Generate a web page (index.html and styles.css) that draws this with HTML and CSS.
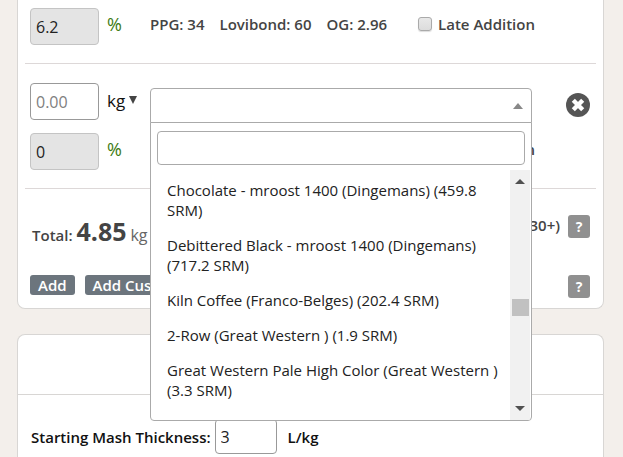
FILE: index.html
```html
<!DOCTYPE html>
<html lang="en">
<head>
  <meta charset="UTF-8" />
  <meta name="viewport" content="width=device-width, initial-scale=1" />
  <title>Recipe Editor</title>
  <link rel="stylesheet" href="styles.css">
</head>
<body>

  <section class="card fermentables">
    <div class="ingredient">
      <input class="field" type="text" value="6.2" aria-label="Percent of bill" readonly />
      <span class="percent">%</span>
      <div class="stats">
        <span>PPG: 34</span>
        <span>Lovibond: 60</span>
        <span>OG: 2.96</span>
        <label class="late"><input type="checkbox" /> Late Addition</label>
      </div>
    </div>

    <div class="ingredient">
      <input class="field" type="text" placeholder="0.00" aria-label="Amount" />
      <button class="unit" type="button">kg <svg width="8" height="8" viewBox="0 0 8 8"><path d="M0 0h8L4 8z" fill="#444" /></svg></button>

      <!-- Fermentable picker -->
      <div class="picker">
        <button class="picker-toggle" type="button" aria-label="Choose fermentable" aria-expanded="true">
          <svg width="10" height="6" viewBox="0 0 10 6"><path d="M0 6h10L5 0z" fill="#888" /></svg>
        </button>
        <div class="picker-menu">
          <input class="picker-search" type="text" aria-label="Search fermentables" />
          <div class="picker-results">
            <ul class="picker-list">
              <li>Chocolate - mroost 1400 (Dingemans) (459.8 SRM)</li>
              <li>Debittered Black - mroost 1400 (Dingemans) (717.2 SRM)</li>
              <li>Kiln Coffee (Franco-Belges) (202.4 SRM)</li>
              <li>2-Row (Great Western ) (1.9 SRM)</li>
              <li>Great Western Pale High Color (Great Western ) (3.3 SRM)</li>
              <li>Crystal (Franco-Belges)</li>
            </ul>
            <div class="scrollbar">
              <svg width="10" height="5" viewBox="0 0 10 5"><path d="M0 5h10L5 0z" fill="#505050" /></svg>
              <div class="scrollbar-thumb"></div>
              <svg width="10" height="5" viewBox="0 0 10 5"><path d="M0 0h10L5 5z" fill="#505050" /></svg>
            </div>
          </div>
        </div>
      </div>

      <button class="remove" type="button" aria-label="Remove">
        <svg width="24" height="24" viewBox="0 0 24 24">
          <circle cx="12" cy="12" r="12" fill="#555" />
          <path d="M7.3 7.3l9.4 9.4M16.7 7.3l-9.4 9.4" stroke="#fff" stroke-width="4.4" />
        </svg>
      </button>

      <input class="field" type="text" value="0" aria-label="Percent of bill" readonly />
      <span class="percent">%</span>
      <div class="stats">
        <span>PPG: 34</span>
        <span>Lovibond: 60</span>
        <span>OG: 2.96</span>
        <label class="late"><input type="checkbox" /> Late Addition</label>
      </div>
    </div>

    <div class="total-row">
      <span class="total">Total: <strong>4.85</strong> <span class="total-unit">kg</span></span>
      <span class="total-note">(30+)</span>
      <button class="help" type="button">?</button>
    </div>

    <div class="actions">
      <button class="btn" type="button">Add</button>
      <button class="btn" type="button">Add Custom</button>
      <button class="help" type="button">?</button>
    </div>
  </section>

  <section class="card mash">
    <div class="card-header"></div>
    <div class="mash-row">
      <label for="thickness">Starting Mash Thickness:</label>
      <input class="thickness" id="thickness" type="text" value="3" />
      <span>L/kg</span>
    </div>
  </section>

</body>
</html>
```
FILE: styles.css
```css
* {
  box-sizing: border-box;
}

body {
  margin: 0;
  padding: 0 19px 0 17px;
  min-height: 100vh;
  display: flex;
  flex-direction: column;
  gap: 25px;
  background: #f3efeb;
  color: #444;
  font-family: "Open Sans", sans-serif;
  font-size: 15px;
  font-weight: 600;
}

button,
input {
  font-family: inherit;
}

button {
  padding: 0;
  border: none;
  background: none;
  cursor: pointer;
}

svg {
  display: block;
  flex: none;
}

/* Cards */
.card {
  background: #fff;
  border: 1px solid #d8d6d4;
  border-radius: 8px;
}

.fermentables {
  padding: 8px 7px 10px;
  border-top: none;
  border-radius: 0 0 8px 8px;
}

/* Ingredient rows */
.ingredient {
  display: grid;
  grid-template-columns: 69px 35px minmax(0, 1fr) 50px;
  gap: 11px 8px;
  align-items: start;
  padding: 0 6px 18px 5px;
  border-bottom: 1px solid #ddd8d8;
  line-height: 32px;
}

.ingredient + .ingredient {
  padding-top: 19px;
}

.field {
  width: 100%;
  height: 37px;
  padding: 0 5px;
  border: 1px solid #999;
  border-radius: 4px;
  font-size: 16px;
  color: #222;
}

.field::placeholder {
  color: #808080;
}

.field:read-only {
  background: #e4e4e4;
  border-color: #c4c4c4;
}

.percent {
  color: #3c7a10;
  font-size: 18px;
  font-weight: 500;
}

.unit {
  display: flex;
  align-items: center;
  gap: 4px;
  height: 34px;
  font-size: 17px;
  color: #111;
}

.stats {
  display: flex;
  gap: 15px;
  white-space: nowrap;
}

.late {
  display: flex;
  align-items: center;
  gap: 6px;
  margin-left: 16px;
}

.late input {
  appearance: none;
  width: 14px;
  height: 14px;
  margin: 0;
  border: 1px solid #aaa;
  border-radius: 3px;
  background: linear-gradient(#e8e8e8, #dcdcdc);
  box-shadow: 0 1px 1px #ddd;
}

.remove {
  justify-self: end;
  margin-top: 10px;
}

/* Fermentable picker */
.picker {
  position: relative;
  height: 34px;
  margin-top: 5px;
}

.picker-toggle {
  display: flex;
  align-items: center;
  justify-content: flex-end;
  width: 100%;
  height: 35px;
  padding-right: 8px;
  border: 1px solid #aaa;
  border-radius: 4px 4px 0 0;
  background: #fff;
}

.picker-menu {
  position: absolute;
  top: 34px;
  left: 0;
  right: 0;
  z-index: 10;
  padding-top: 8px;
  border: 1px solid #aaa;
  border-radius: 0 0 4px 4px;
  background: #fff;
  overflow: hidden;
}

.picker-search {
  display: block;
  width: calc(100% - 12px);
  height: 34px;
  margin: 0 6px 5px;
  padding: 0 6px;
  border: 1px solid #aaa;
  border-radius: 4px;
  font-size: 15px;
}

.picker-results {
  display: flex;
  height: 250px;
  overflow: hidden;
}

.picker-list {
  flex: 1;
  margin: 0;
  padding: 10px 8px 0 16px;
  list-style: none;
  color: #222;
  font-size: 15px;
  font-weight: 400;
  line-height: 20px;
}

.picker-list li {
  margin-bottom: 15px;
}

.scrollbar {
  display: flex;
  flex-direction: column;
  align-items: center;
  justify-content: space-between;
  width: 20px;
  margin-right: 1px;
  padding: 9px 0;
  background: #f1f1f1;
}

.scrollbar-thumb {
  width: 17px;
  height: 17px;
  margin-top: 24px;
  background: #c1c1c1;
}

/* Totals and actions */
.total-row {
  display: flex;
  align-items: flex-start;
  padding: 20px 6px 0 7px;
  line-height: 32px;
}

.total {
  padding-top: 6px;
}

.total strong {
  font-size: 25px;
  font-weight: 700;
}

.total-unit {
  color: #666;
  font-size: 16px;
  font-weight: 400;
}

.total-note {
  margin-left: auto;
  margin-right: 8px;
}

.help {
  width: 22px;
  height: 23px;
  border-radius: 3px;
  background: #909090;
  color: #fff;
  font-size: 14px;
  font-weight: 700;
}

.total-row .help {
  margin-top: 6px;
}

.actions {
  display: flex;
  align-items: flex-start;
  gap: 10px;
  padding: 24px 6px 0 5px;
}

.actions .help {
  margin-left: auto;
}

.btn {
  height: 20px;
  padding: 0 8px;
  border-radius: 3px;
  background: #6c757d;
  color: #fff;
  font-size: 15px;
  font-weight: 600;
  line-height: 20px;
}

/* Mash card */
.mash {
  flex: 1;
  border-bottom: none;
  border-radius: 8px 8px 0 0;
}

.card-header {
  height: 60px;
  border-bottom: 1px solid #d8d6d4;
}

.mash-row {
  display: flex;
  align-items: center;
  padding: 24px 13px 3px;
  color: #111;
}

.thickness {
  width: 62px;
  height: 35px;
  margin: 0 11px 0 4px;
  padding: 0 5px;
  border: 1px solid #999;
  border-radius: 4px;
  color: #222;
  font-size: 16px;
}
```
